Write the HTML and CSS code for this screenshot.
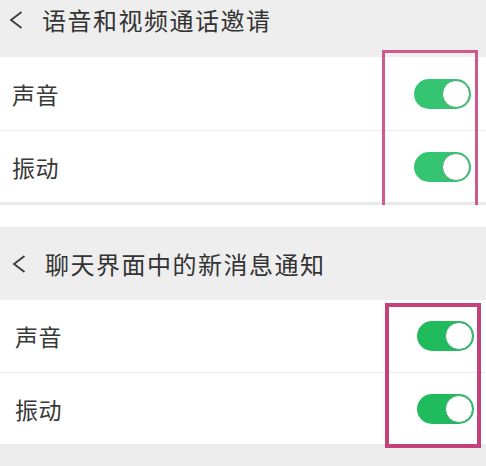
FILE: index.html
```html
<!DOCTYPE html>
<html lang="zh-CN">
<head>
<meta charset="utf-8">
<title>通知设置</title>
<link rel="stylesheet" href="styles.css">
</head>
<body>
<div class="page">
  <section class="panel panel-one">
    <header class="bar bar-one">
      <svg class="chev" width="14" height="18" viewBox="0 0 14 18"><path d="M12.5 1 L2 9 L12.5 17" fill="none" stroke="#3a3a3a" stroke-width="1.8"/></svg>
      <h1 class="title">语音和视频通话邀请</h1>
    </header>
    <div class="list">
      <div class="row row-first"><span class="label">声音</span><span class="toggle"><span class="knob"></span></span></div>
      <div class="row"><span class="label">振动</span><span class="toggle"><span class="knob"></span></span></div>
    </div>
    <div class="mark mark-one"></div>
  </section>

  <section class="panel panel-two">
    <header class="bar bar-two">
      <svg class="chev" width="14" height="18" viewBox="0 0 14 18"><path d="M12.5 1 L2 9 L12.5 17" fill="none" stroke="#3a3a3a" stroke-width="1.8"/></svg>
      <h1 class="title">聊天界面中的新消息通知</h1>
    </header>
    <div class="list">
      <div class="row row-first"><span class="label">声音</span><span class="toggle toggle-dark"><span class="knob"></span></span></div>
      <div class="row"><span class="label">振动</span><span class="toggle toggle-dark"><span class="knob"></span></span></div>
    </div>
    <div class="footer"></div>
    <div class="mark mark-two"></div>
  </section>
</div>
</body>
</html>
```

FILE: styles.css
```css
* { box-sizing: border-box; }
html, body { margin: 0; padding: 0; background: #fff; }
body {
  width: 486px;
  height: 466px;
  overflow: hidden;
  font-family: "Noto Sans CJK SC", "Noto Sans", sans-serif;
  color: #363636;
}
.page { display: flex; flex-direction: column; }
.panel { position: relative; background: #fff; }

.bar {
  display: flex;
  background: #eeeeee;
}
.bar-one {
  height: 57px;
  align-items: flex-start;
  padding: 6px 0 0 9px;
}
.bar-two {
  height: 73px;
  align-items: center;
  padding: 0 0 0 12px;
  margin-top: 22px;
}
.chev { flex: none; margin-top: 5px; }
.bar-two .chev { margin-top: 0; }
.title {
  margin: 0 0 0 19px;
  font-size: 24px;
  line-height: 28px;
  font-weight: 400;
  letter-spacing: 1.5px;
  color: #333;
}

.list { display: flex; flex-direction: column; }
.row {
  height: 72px;
  display: flex;
  align-items: center;
  justify-content: space-between;
  padding: 0 15px 0 12px;
  border-top: 1px solid #ececec;
}
.row-first { border-top: none; height: 73px; }
.panel-one .list { border-bottom: 3px solid #e9e9e9; }
.panel-two .row { padding: 0 12px 0 15px; }
.panel-two .row-first { height: 72px; }
.label {
  font-size: 23px;
  line-height: 28px;
  letter-spacing: 0.5px;
  color: #383838;
}

.toggle {
  width: 57px;
  height: 30px;
  border-radius: 15px;
  background: #35c472;
  display: flex;
  align-items: center;
  justify-content: flex-end;
  padding-right: 1px;
}
.toggle-dark { background: #1fbb5c; }
.knob {
  width: 28px;
  height: 28px;
  border-radius: 50%;
  background: #fff;
  border: 1px solid #4aa874;
}

.footer { height: 23px; background: #ececec; }

.mark {
  position: absolute;
  border: 3px solid #cc5a8c;
  pointer-events: none;
}
.mark-one {
  left: 382px;
  top: 50px;
  width: 96px;
  height: 155px;
  border-bottom: none;
}
.mark-two {
  left: 385px;
  top: 98px;
  width: 96px;
  height: 145px;
  border-color: #c4417a;
  border-width: 4px;
}
```
